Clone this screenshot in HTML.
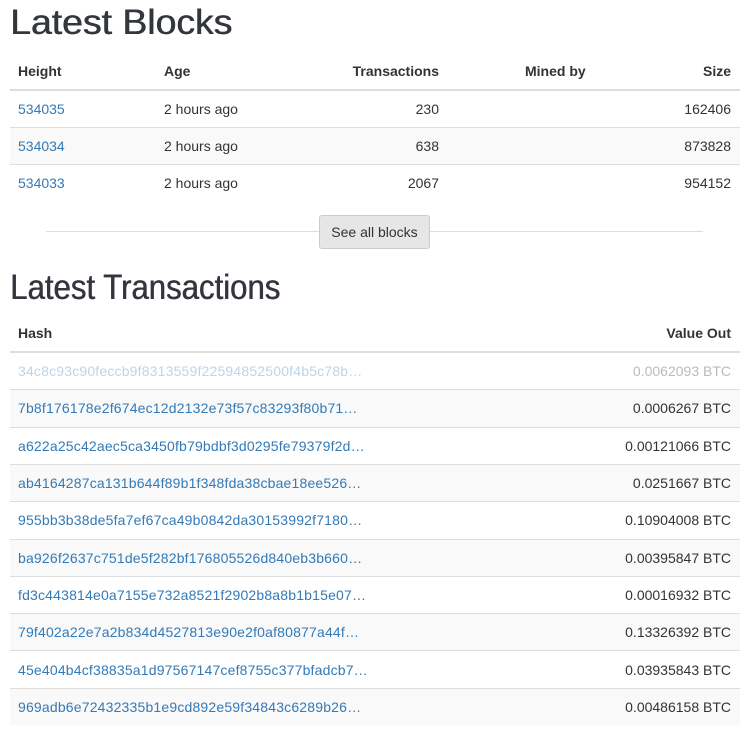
<!DOCTYPE html>
<html><head><style>
*{margin:0;padding:0;box-sizing:border-box}
body{width:751px;height:736px;background:#fff;font-family:"Liberation Sans",sans-serif;font-size:14px;color:#333;position:relative;overflow:hidden}
.a{position:absolute;white-space:nowrap}
h1{position:absolute;left:10px;font-size:35px;font-weight:normal;color:#33363d;line-height:40px;transform-origin:0 0;white-space:nowrap;text-shadow:0.6px 0 0 #33363d}
.row{position:absolute;left:10px;width:730px;height:37px;border-top:1px solid #ddd}
.g{background:#f9f9f9}
.hd{position:absolute;left:10px;width:730px;height:2px;background:#ddd}
.b{font-weight:bold}
.l{color:#337ab7}
.h{letter-spacing:0.18px}
</style></head><body>
<h1 style="top:3px;transform:scaleX(1.067)">Latest Blocks</h1>
<div class="a b" style="left:18px;top:63px">Height</div>
<div class="a b" style="left:164px;top:63px">Age</div>
<div class="a b" style="right:312px;top:63px">Transactions</div>
<div class="a b" style="left:525px;top:63px">Mined by</div>
<div class="a b" style="right:20px;top:63px">Size</div>
<div class="hd" style="top:89px"></div>
<div class="row" style="top:91px;border-top:none"></div>
<div class="row g" style="top:127px"></div>
<div class="row" style="top:164px"></div>
<div class="a l" style="left:18px;top:101px">534035</div><div class="a" style="left:164px;top:101px">2 hours ago</div><div class="a" style="right:312px;top:101px">230</div><div class="a" style="right:20px;top:101px">162406</div>
<div class="a l" style="left:18px;top:138px">534034</div><div class="a" style="left:164px;top:138px">2 hours ago</div><div class="a" style="right:312px;top:138px">638</div><div class="a" style="right:20px;top:138px">873828</div>
<div class="a l" style="left:18px;top:175px">534033</div><div class="a" style="left:164px;top:175px">2 hours ago</div><div class="a" style="right:312px;top:175px">2067</div><div class="a" style="right:20px;top:175px">954152</div>
<div class="a" style="left:46px;top:231px;width:657px;height:1px;background:#ddd"></div>
<div class="a" style="left:319px;top:215px;width:111px;height:34px;background:#e6e6e6;border:1px solid #ccc;border-radius:3px;text-align:center;line-height:32px">See all blocks</div>
<h1 style="top:268px;transform:scaleX(0.89)">Latest Transactions</h1>
<div class="a b" style="left:18px;top:325px">Hash</div>
<div class="a b" style="right:20px;top:325px">Value Out</div>
<div class="hd" style="top:351px"></div>
<div class="row" style="top:353px;border-top:none"></div>
<div class="row g" style="top:389px;height:38px"></div>
<div class="row" style="top:427px"></div>
<div class="row g" style="top:464px"></div>
<div class="row" style="top:501px;height:38px"></div>
<div class="row g" style="top:539px"></div>
<div class="row" style="top:576px"></div>
<div class="row g" style="top:613px"></div>
<div class="row" style="top:650px;height:38px"></div>
<div class="row g" style="top:688px"></div>
<div class="a h" style="left:18px;top:363px;color:#bcd5ea">34c8c93c90feccb9f8313559f22594852500f4b5c78b…</div><div class="a" style="right:20px;top:363px;color:#bbb">0.0062093 BTC</div>
<div class="a l h" style="left:18px;top:400px">7b8f176178e2f674ec12d2132e73f57c83293f80b71…</div><div class="a" style="right:20px;top:400px">0.0006267 BTC</div>
<div class="a l h" style="left:18px;top:438px">a622a25c42aec5ca3450fb79bdbf3d0295fe79379f2d…</div><div class="a" style="right:20px;top:438px">0.00121066 BTC</div>
<div class="a l h" style="left:18px;top:475px">ab4164287ca131b644f89b1f348fda38cbae18ee526…</div><div class="a" style="right:20px;top:475px">0.0251667 BTC</div>
<div class="a l h" style="left:18px;top:512px">955bb3b38de5fa7ef67ca49b0842da30153992f7180…</div><div class="a" style="right:20px;top:512px">0.10904008 BTC</div>
<div class="a l h" style="left:18px;top:550px">ba926f2637c751de5f282bf176805526d840eb3b660…</div><div class="a" style="right:20px;top:550px">0.00395847 BTC</div>
<div class="a l h" style="left:18px;top:587px">fd3c443814e0a7155e732a8521f2902b8a8b1b15e07…</div><div class="a" style="right:20px;top:587px">0.00016932 BTC</div>
<div class="a l h" style="left:18px;top:624px">79f402a22e7a2b834d4527813e90e2f0af80877a44f…</div><div class="a" style="right:20px;top:624px">0.13326392 BTC</div>
<div class="a l h" style="left:18px;top:662px">45e404b4cf38835a1d97567147cef8755c377bfadcb7…</div><div class="a" style="right:20px;top:662px">0.03935843 BTC</div>
<div class="a l h" style="left:18px;top:699px">969adb6e72432335b1e9cd892e59f34843c6289b26…</div><div class="a" style="right:20px;top:699px">0.00486158 BTC</div>
</body></html>
